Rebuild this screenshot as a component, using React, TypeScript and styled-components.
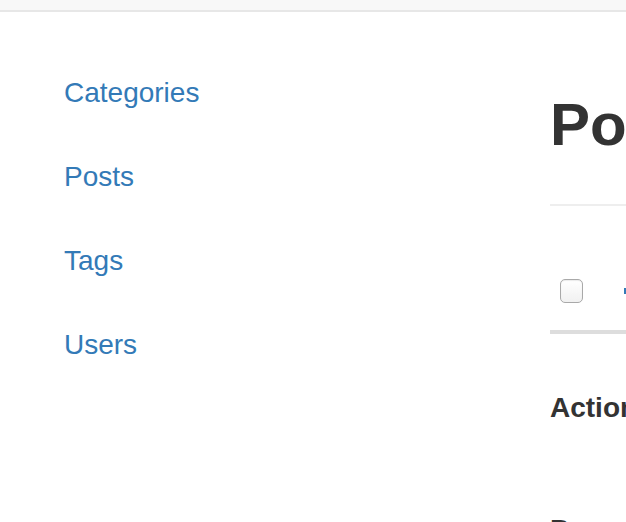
import React from "react";
import styled, { createGlobalStyle } from "styled-components";

const GlobalStyle = createGlobalStyle`
  html, body {
    margin: 0;
    padding: 0;
    background: #fff;
    overflow: hidden;
  }
  body {
    font-family: "Liberation Sans", Arial, Helvetica, sans-serif;
    font-size: 28px;
    line-height: 40px;
    color: #333;
  }
`;

const Navbar = styled.div`
  height: 10px;
  background: #f8f8f8;
  border-bottom: 2px solid #e7e7e7;
`;

const Layout = styled.div`
  display: grid;
  grid-template-columns: 516px 1fr;
  padding-left: 34px;
  min-width: 0;
`;

const SideNav = styled.ul`
  list-style: none;
  margin: 41px 0 0;
  padding: 0;
  display: flex;
  flex-direction: column;
  gap: 4px;
`;

const NavLink = styled.a`
  display: block;
  padding: 20px 30px;
  font-size: 28px;
  line-height: 40px;
  color: #337ab7;
  text-decoration: none;
`;

const Content = styled.main`
  min-width: 0;
  overflow: hidden;
  padding-top: 80px;
`;

const PageHeader = styled.div`
  width: 900px;
  padding-bottom: 46px;
  border-bottom: 2px solid #eee;
`;

const Title = styled.h1`
  margin: 0;
  font-size: 60px;
  line-height: 66px;
  font-weight: 700;
  color: #333;
  white-space: nowrap;
`;

const Table = styled.table`
  width: 900px;
  margin-top: 52px;
  border-collapse: collapse;
`;

const HeadCell = styled.th<{ $narrow?: boolean }>`
  padding: 16px 16px 16px ${(p) => (p.$narrow ? "10px" : "16px")};
  height: 40px;
  line-height: 40px;
  text-align: left;
  vertical-align: top;
  border-bottom: 4px solid #ddd;
  width: ${(p) => (p.$narrow ? "23px" : "auto")};
`;

const Check = styled.input.attrs({ type: "checkbox" })`
  appearance: none;
  display: block;
  margin: 5px 0 0 0;
  width: 23px;
  height: 24px;
  box-sizing: border-box;
  border: 1px solid #a9a9a9;
  border-radius: 5px;
  background: linear-gradient(#ffffff, #f1f1f1);
  box-shadow: inset 0 1px 1px rgba(0, 0, 0, 0.08);
`;

const SortLink = styled.a`
  display: flex;
  align-items: flex-start;
  height: 40px;
  padding-left: 9px;
  color: #337ab7;
  font-weight: 700;
  text-decoration: none;
  white-space: nowrap;
`;

const SectionLabel = styled.div<{ $gap: number }>`
  margin-top: ${(p) => p.$gap}px;
  font-size: 28px;
  line-height: 40px;
  font-weight: 700;
  color: #333;
  white-space: nowrap;
`;

const SortIcon = () => (
  <svg width="16" height="26" viewBox="0 0 16 26" style={{ display: "block" }}>
    <rect x="0" y="14" width="2" height="6" fill="#337ab7" />
    <path d="M9 8 L14 14 H11 V24 H7 V14 H4 Z" fill="#337ab7" />
  </svg>
);

export default function App() {
  const links = ["Categories", "Posts", "Tags", "Users"];
  return (
    <>
      <GlobalStyle />
      <Navbar />
      <Layout>
        <SideNav>
          {links.map((l) => (
            <li key={l}>
              <NavLink href="#">{l}</NavLink>
            </li>
          ))}
        </SideNav>
        <Content>
          <PageHeader>
            <Title>Posts</Title>
          </PageHeader>
          <Table>
            <thead>
              <tr>
                <HeadCell $narrow>
                  <Check />
                </HeadCell>
                <HeadCell>
                  <SortLink href="#">
                    <SortIcon />
                  </SortLink>
                </HeadCell>
              </tr>
            </thead>
          </Table>
          <SectionLabel $gap={54}>Actions</SectionLabel>
          <SectionLabel $gap={82}>Per page</SectionLabel>
        </Content>
      </Layout>
    </>
  );
}
